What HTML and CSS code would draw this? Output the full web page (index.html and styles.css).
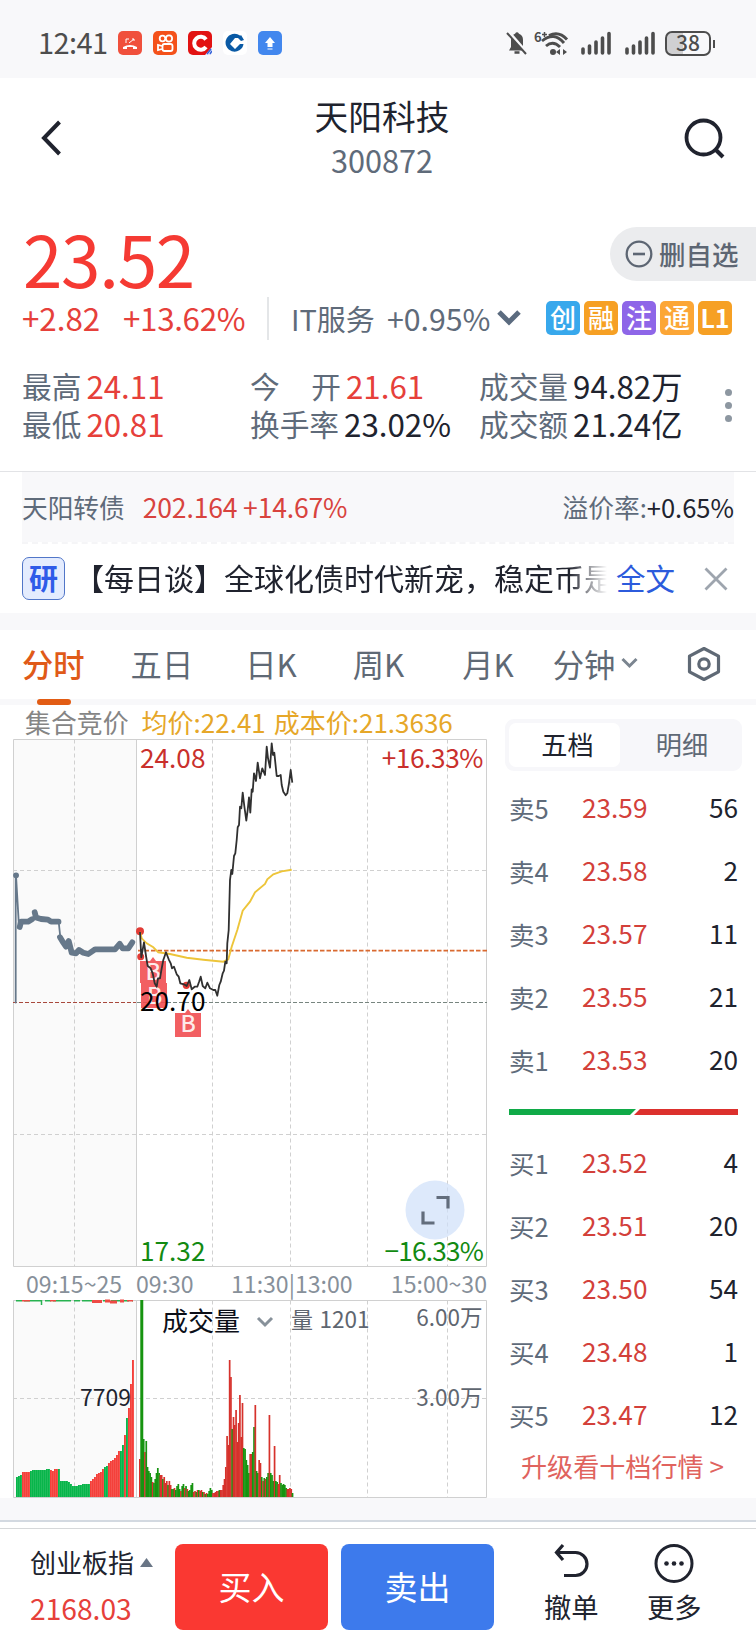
FILE: index.html
```html
<!DOCTYPE html>
<html lang="zh-CN">
<head>
  <meta charset="UTF-8">
  <meta name="viewport" content="width=device-width, initial-scale=1.0">
  <title>天阳科技 300872</title>
  <link rel="stylesheet" href="styles.css">
</head>
<body>
  <div class="status-bar">
    <span class="clock">12:41</span>
    <div class="app-icons">
      <svg width="24" height="24" viewBox="0 0 24 24"><rect width="24" height="24" rx="5" fill="#f0503c"/><path d="M5 18v-2q7-4 14 0v2h-4v-2h-6v2z" fill="#fff"/><path d="M8 8v4M8 8h3M11 12l5-4M14 8h2v2" stroke="#fff" stroke-width="1" fill="none"/></svg>
      <svg width="24" height="24" viewBox="0 0 24 24"><rect width="24" height="24" rx="5" fill="#f4511a"/><g fill="none" stroke="#fff" stroke-width="1.8"><circle cx="9.5" cy="7.5" r="2.8"/><circle cx="16" cy="7.5" r="3.1"/><rect x="9.5" y="13" width="10" height="7" rx="2"/><path d="M9 15l-4-1v5l4-1"/></g></svg>
      <svg width="24" height="24" viewBox="0 0 24 24"><rect width="24" height="24" rx="5" fill="#e21212"/><path d="M18 8.500A6.500 6.500 0 1 0 18 16" stroke="#fff" stroke-width="4" fill="none"/><path d="M24 16v4a4 4 0 0 1-4 4h-3z" fill="#dfe6ff"/><path d="M19 23l4-5M22 23l2-3" stroke="#3563d8" stroke-width="1.5"/></svg>
      <svg width="24" height="24" viewBox="0 0 24 24"><rect width="24" height="24" rx="5" fill="#fff"/><path d="M17 4.500A9 9 0 1 0 20.500 13H17l-5 5-5-5 5-6h6z" fill="#0a5aa5"/><path d="M18 4l3 5-3 1-3-3z" fill="#0a5aa5"/><path d="M12 8.500l4 4-4 4-4-4z" fill="#fff"/></svg>
      <svg width="24" height="24" viewBox="0 0 24 24"><rect width="24" height="24" rx="5" fill="#4287ee"/><path d="M12 6l5 6h-2.500v4h-5v-4H7zM9.500 17.500h5v1h-5z" fill="#fff"/></svg>
    </div>
    <div class="sys-icons">
      <svg width="22" height="24" viewBox="0 0 22 24"><path d="M3 19.500L5 16V9q0-5 4-6.300Q11 0 13 2.700 17 4 17 9v7l3 3.500z" fill="#4d4d4d"/><path d="M8.500 21.500h5" stroke="#4d4d4d" stroke-width="2.500"/><path d="M2 0l19 22" stroke="#f8f8fa" stroke-width="3"/><path d="M1 2l19 21" stroke="#4d4d4d" stroke-width="2"/></svg>
      <svg class="wifi" width="35" height="25" viewBox="0 0 35 25"><text x="0" y="11" font-size="13" font-weight="700" fill="#4d4d4d">6</text><path d="M8 3.500h5M10.500 1v5" stroke="#4d4d4d" stroke-width="1.500"/><g fill="none" stroke="#4d4d4d" stroke-width="2.900"><path d="M15 4.500q10-5 18 4"/><path d="M8 10q12-10 22 2"/><path d="M12 15q7-6 14 1"/></g><circle cx="19" cy="21" r="3" fill="#4d4d4d"/><path d="M22 21l4-3v6zM33 21l-4-3v6z" fill="#4d4d4d"/></svg>
      <svg class="signal" width="30" height="24" viewBox="0 0 30 24"><path d="M2 18v4M8.500 15v7M15 11v11M21.500 7v15M28 2.500V22" stroke="#4d4d4d" stroke-width="3.600" stroke-linecap="round"/></svg>
      <svg class="signal" width="30" height="24" viewBox="0 0 30 24"><path d="M2 18v4M8.500 15v7M15 11v11M21.500 7v15M28 2.500V22" stroke="#4d4d4d" stroke-width="3.600" stroke-linecap="round"/></svg>
      <span class="battery">38</span>
    </div>
  </div>

  <header class="nav">
    <svg width="32" height="40" viewBox="0 0 32 40"><path d="M25.500 4L10 20l15.500 16" fill="none" stroke="#20232e" stroke-width="4"/></svg>
    <div class="nav-title">
      <h1>天阳科技</h1>
      <p>300872</p>
    </div>
    <svg width="42" height="42" viewBox="0 0 42 42"><circle cx="19.500" cy="19.500" r="17" fill="none" stroke="#20232e" stroke-width="3.800"/><path d="M31 31l8 8" stroke="#20232e" stroke-width="4"/></svg>
  </header>

  <section class="quote">
    <div class="price-row">
      <span class="price">23.52</span>
      <button class="remove-btn">
        <svg width="28" height="28" viewBox="0 0 28 28"><circle cx="14" cy="14" r="12.300" fill="none" stroke="#5d6673" stroke-width="2.300"/><path d="M8 14h12" stroke="#5d6673" stroke-width="2.600"/></svg>
        <span>删自选</span>
      </button>
    </div>
    <div class="change-row">
      <span class="up change">+2.82</span>
      <span class="up percent">+13.62%</span>
      <span class="industry">IT服务</span>
      <span class="industry-change">+0.95%</span>
      <svg width="26" height="20" viewBox="0 0 26 20"><path d="M3 4l10 10L23 4" fill="none" stroke="#5b6b7f" stroke-width="5"/></svg>
      <div class="tags">
        <span class="tag blue">创</span><span class="tag orange">融</span><span class="tag purple">注</span><span class="tag amber">通</span><span class="tag orange latin">L1</span>
      </div>
    </div>
    <div class="stats">
      <dl>
        <div><dt>最高</dt><dd class="up">24.11</dd></div>
        <div><dt>最低</dt><dd class="up">20.81</dd></div>
      </dl>
      <dl>
        <div><dt class="spread"><span>今</span><span>开</span></dt><dd class="up">21.61</dd></div>
        <div><dt>换手率</dt><dd>23.02%</dd></div>
      </dl>
      <dl>
        <div><dt>成交量</dt><dd>94.82万</dd></div>
        <div><dt>成交额</dt><dd>21.24亿</dd></div>
      </dl>
      <div class="more-dots"><i></i><i></i><i></i></div>
    </div>
  </section>

  <section class="bond">
    <span>天阳转债</span>
    <span class="up bond-price">202.164 +14.67%</span>
    <span class="premium">溢价率:<b>+0.65%</b></span>
  </section>

  <section class="news">
    <span class="badge">研</span>
    <div class="headline">【每日谈】全球化债时代新宠，稳定币是</div>
    <a class="full">全文</a>
    <svg width="24" height="24" viewBox="0 0 24 24"><path d="M1.500 1.500l21 21M22.500 1.500l-21 21" stroke="#9ea5ae" stroke-width="2.800"/></svg>
  </section>

  <nav class="periods">
    <a class="active">分时</a>
    <a>五日</a>
    <a>日K</a>
    <a>周K</a>
    <a>月K</a>
    <a>分钟<svg width="17" height="12" viewBox="0 0 17 12"><path d="M1.500 2l7 7 7-7" fill="none" stroke="#7b8590" stroke-width="3"/></svg></a>
    <svg class="settings" width="34" height="36" viewBox="0 0 34 36"><path d="M17 2.500l14.500 7.700v15.600L17 33.500 2.500 25.800V10.200z" fill="none" stroke="#5f6975" stroke-width="3.200" stroke-linejoin="round"/><circle cx="17" cy="18" r="5.200" fill="none" stroke="#5f6975" stroke-width="3.200"/></svg>
  </nav>

  <main class="board">
    <div class="charts">
      <div class="legend">
        <span>集合竞价</span>
        <span class="avg">均价:22.41</span>
        <span class="avg">成本价:21.3636</span>
      </div>
      <svg class="price-chart" width="500" height="530" viewBox="0 0 500 530">
        <rect x="13" y="1" width="123.500" height="527" fill="#fafafa"/>
        <g class="grid">
          <path d="M74.500 1.500v527M212.500 1.500v527M290.500 1.500v527M367.500 1.500v527M447.500 1.500v527M13 132.500h474M13 396.500h474"/>
        </g>
        <path d="M13.500 1.500h473v527h-473zM136.500 1.500v527" fill="none" stroke="#d0d0d0"/>
        <path d="M13 264.500h123" stroke="#a8483c" stroke-dasharray="4 2"/>
        <path d="M137 264.500h350" stroke="#77857f" stroke-dasharray="4 2"/>
        <path d="M138 212.700h349" stroke="#d96a30" stroke-width="1.800" stroke-dasharray="4.500 2"/>
        <!-- call auction -->
        <g fill="none" stroke="#66788a" stroke-linecap="round" stroke-linejoin="round">
          <path d="M15.700 137V264.500M16 137.300L19 189M58.700 184l1.600 15" stroke-width="1.800"/>
          <path d="M16 137.300h.1M19.700 189L21 183.700H28L32 181.300M34.700 174.300L36 179.500 41 181l7 .7 3 2h7.500M60 199.300l3.300 5.400 2.700 4 2.700-5.700 1.300 5 1.700 6.700 4.300.6 3-3.300 4.300 2.700 5 1.300 6.700-4.700h20l4.700-5.500 3 4.500h5.600l4-6" stroke-width="5.800"/>
        </g>
        <g class="trade-mark">
          <path d="M140 223h10l3-4 3 4h10v22h-26z"/><path d="M141 245h26v25h-26z"/><path d="M175 275h10l3-4 3 4h10v24h-26z"/>
          <text x="145.500" y="242">B</text><text x="147" y="266">B</text><text x="180.500" y="294">B</text>
        </g>
        <g fill="#e23b35"><circle cx="140" cy="193.300" r="4"/><circle cx="140.700" cy="218.700" r="3.500"/><circle cx="186.300" cy="247.300" r="3.600"/></g>
        <polyline class="avg-line" points="140,194 141.7,200.3 146.7,205.3 153.3,209.3 158.3,214.3 170,216 186.7,219.7 203.3,221.7 223.3,223.7 228.3,221.3 231.7,208.7 237.3,192 242.7,172.7 250,163.7 255,154.3 265,146 267.3,141.3 273.3,136.3 281.7,133.3 291.7,131.7"/>
        <polyline class="price-line" points="140,194 141.3,219.3 144,204.3 146,218 147.7,228 150.7,230.3 152.7,235.3 154.7,245.3 156.7,248.7 158,240.3 160,240.3 161.3,232.7 163.3,222 166,214.3 168.7,221.3 170.7,225.3 172,230.3 174,228.7 176.7,236.3 178.7,238.7 180.3,245.3 184,246.3 186.7,248 189.3,242 191.7,251.3 194.7,248.7 197.3,248.7 199,244 200.7,238.7 202.7,248 205.3,250.3 207.3,244.7 210,250.3 213.3,252 215.3,252 217.3,257.7 219.3,247 220.7,243.7 222.7,235.3 224,232.7 225.3,223.7 226.7,225.3 227.3,205.3 228.7,192 230,142 231.3,132 232.3,136 234,118 235.3,115.3 236.7,102 237.7,89.3 239,87 240,68.7 241.3,70.3 242.7,54.7 244.3,68 246.3,82.7 247.7,72 249,59.3 250.3,74.7 251.7,51.3 252.7,53.7 254,35.3 256,43 257.7,24.7 260,40.3 262.3,30.3 265,37 266.7,8.7 268,20.3 270,29.7 271.7,5.3 273,17 274.3,14.7 276.7,38 278.7,38 280.7,37 281.7,47 283.3,53.7 285.7,57.3 287.3,55.3 289,45.3 290.7,32 292.3,44.7"/>
        <circle cx="435" cy="472" r="29.500" fill="#cfe0fa" fill-opacity=".7"/>
        <path d="M436.500 459.500h11.500v11M423 473.500v11.500h11.500" fill="none" stroke="#626d7c" stroke-width="3.200"/>
        <g class="axis-label">
          <text x="140" y="30" fill="#c9302c">24.08</text>
          <text x="483" y="30" fill="#c9302c" text-anchor="end" letter-spacing="-0.4">+16.33%</text>
          <text x="140" y="273" fill="#000">20.70</text>
          <text x="140" y="523" fill="#128a12">17.32</text>
          <text x="483" y="523" fill="#128a12" text-anchor="end" letter-spacing="-0.8">−16.33%</text>
        </g>
      </svg>
      <div class="time-axis">
        <span>09:15~25</span><span>09:30</span><span>11:30|13:00</span><span>15:00~30</span>
      </div>
      <svg class="volume-chart" width="500" height="199" viewBox="0 0 500 199">
        <rect x="13" y="1" width="123.500" height="197" fill="#fafafa"/>
        <g class="grid"><path d="M74.500 1.500v197M212.500 1.500v197M290.500 1.500v197M367.500 1.500v197M447.500 1.500v197M13 99.500h474"/></g>
        <path d="M13.500 1.500h473v197h-473zM136.500 1.500v197" fill="none" stroke="#d0d0d0"/>
        <path d="M16 1.800h117" stroke="#27b250" stroke-width="1.500" stroke-dasharray="6 2 18 3"/>
        <path d="M22 1.800h8M50 1.800h6M127 1.800h6" stroke="#ee4a45" stroke-width="1.500"/>
        <path d="M92 2.500h10M105 2h5M110 3h7M120 2h4" stroke="#ee4a45" stroke-width="3"/>
        <path d="M41.500 1v5" stroke="#27b250" stroke-width="1.500"/>
        <g id="auction-bars"></g>
        <g id="volume-bars"></g>
        <text x="162" y="31.500" font-size="26" fill="#0b0e18">成交量</text>
        <path d="M258 19l7 7 7-7" fill="none" stroke="#87919a" stroke-width="3"/>
        <text x="291" y="28.500" font-size="22" fill="#5f6670">量</text>
        <text x="319.500" y="28.500" font-size="22.500" fill="#5f6670">1201</text>
        <text x="482.500" y="26.500" font-size="22.500" fill="#5f6670" text-anchor="end">6.00万</text>
        <text x="482.500" y="107" font-size="22.500" fill="#5f6670" text-anchor="end">3.00万</text>
        <text x="80" y="107" font-size="23" fill="#20232e">7709</text>
      </svg>
    </div>

    <aside class="orders">
      <div class="switch"><span class="active">五档</span><span>明细</span></div>
      <ul>
        <li><span>卖5</span><b>23.59</b><em>56</em></li>
        <li><span>卖4</span><b>23.58</b><em>2</em></li>
        <li><span>卖3</span><b>23.57</b><em>11</em></li>
        <li><span>卖2</span><b>23.55</b><em>21</em></li>
        <li><span>卖1</span><b>23.53</b><em>20</em></li>
      </ul>
      <svg class="ratio" width="229" height="6" viewBox="0 0 229 6"><path d="M0 0h127l-6 6H0z" fill="#10aa48"/><path d="M131 0h98v6H125z" fill="#dc302d"/></svg>
      <ul>
        <li><span>买1</span><b>23.52</b><em>4</em></li>
        <li><span>买2</span><b>23.51</b><em>20</em></li>
        <li><span>买3</span><b>23.50</b><em>54</em></li>
        <li><span>买4</span><b>23.48</b><em>1</em></li>
        <li><span>买5</span><b>23.47</b><em>12</em></li>
      </ul>
      <a class="upgrade">升级看十档行情 &gt;</a>
    </aside>
  </main>

  <footer class="trade-bar">
    <div class="index">
      <p>创业板指<svg width="13" height="9" viewBox="0 0 13 9"><path d="M6.500 0L13 9H0z" fill="#697585"/></svg></p>
      <p class="up">2168.03</p>
    </div>
    <button class="buy">买入</button>
    <button class="sell">卖出</button>
    <a class="action">
      <svg width="38" height="40" viewBox="0 0 38 40"><path d="M11 2L4.500 9.500 11 17M5 9.500h18.500a11.500 11.500 0 0 1 0 23H12" fill="none" stroke="#20232e" stroke-width="3.200"/></svg>
      <span>撤单</span>
    </a>
    <a class="action last">
      <svg width="40" height="40" viewBox="0 0 40 40"><circle cx="20" cy="20.500" r="18" fill="none" stroke="#20232e" stroke-width="3"/><g fill="#20232e"><circle cx="12.500" cy="20.500" r="2.300"/><circle cx="20" cy="20.500" r="2.300"/><circle cx="27.500" cy="20.500" r="2.300"/></g></svg>
      <span>更多</span>
    </a>
  </footer>

  <script>
    // height + colour, one entry per bar
    const auction = "20g 21g 22g 25r 25r 25r 25r 26g 27g 27g 27g 27g 27g 27g 27g 28g 28g 27r 26r 28r 28r 28g 16g 16g 16g 16g 15g 13g 11g 11g 11g 12g 12g 13g 13g 13g 13g 16r 18r 20r 23r 24r 25r 28r 30g 31g 34r 36r 37r 39r 42r 46r 46g 52g 62r 79g 89r 113r 137r";
    const volume = "38r 197g 197g 58g 45r 56g 30g 26g 24g 20g 15r 14g 18g 24g 29g 24g 22r 22r 18g 20r 14r 16r 12g 16r 12r 8g 8g 9r 7g 11g 13g 8g 6r 11g 13g 9r 11g 8r 6g 7g 12g 14g 5r 6r 5g 7r 7g 6r 7r 5g 5r 3g 4r 3g 6g 9g 7g 4r 4r 5r 6r 6r 7g 7r 7r 12r 18r 30r 61r 52r 137r 120r 68g 80r 72r 87r 55r 74r 102r 60r 94r 49g 48g 37g 32g 24g 43r 43r 45g 70g 92r 26g 24g 37r 34r 20g 16r 19g 18r 20g 24g 82r 24g 22g 16g 51r 16g 15g 13r 22r 14g 12g 13g 12g 9g 8r 8r 9r 8r 4g";

    function drawBars(id, data, start, step, width, colors) {
      document.getElementById(id).innerHTML = data.split(" ").map((item, i) => {
        const h = parseInt(item);
        return `<rect x="${(start + i * step).toFixed(2)}" y="${198 - h}" width="${width}" height="${h}" fill="${colors[item.slice(-1)]}"/>`;
      }).join("");
    }

    drawBars("auction-bars", auction, 16, 2, 1.9, { r: "#f4403a", g: "#08b54a" });
    drawBars("volume-bars", volume, 139, 1.283, 1.7, { r: "#d6322c", g: "#169410" });
  </script>
</body>
</html>
```

FILE: styles.css
```css
* { margin: 0; padding: 0; box-sizing: border-box; }
body {
  width: 756px;
  height: 1632px;
  overflow: hidden;
  background-color: #fff;
  color: #20232e;
  font-family: "Noto Sans CJK SC", sans-serif;
  line-height: 1;
}
svg { display: block; flex: none; }
button { border: none; font-family: inherit; }
ul { list-style: none; }
.up { color: #e6403a; }

.status-bar {
  height: 78px;
  padding: 8px 45px 0 38px;
  background-color: #f8f8fa;
  display: flex;
  align-items: center;
}
.clock { width: 80px; padding-bottom: 3px; font-size: 29px; letter-spacing: -0.6px; color: #4d4d4d; }
.app-icons { display: flex; gap: 11px; }
.sys-icons { display: flex; align-items: center; margin-left: auto; }
.wifi { margin: 0 12px 0 6px; overflow: visible; }
.signal { margin-right: 14px; }
.battery {
  position: relative;
  width: 46px;
  height: 25px;
  margin-left: -4px;
  border: 2px solid #4d4d4d;
  border-radius: 7px;
  background: linear-gradient(90deg, #d0d0d2 38%, transparent 38%);
  color: #4d4d4d;
  font-size: 21px;
  font-weight: 500;
  line-height: 19px;
  text-align: center;
}
.battery::after {
  content: "";
  position: absolute;
  right: -6px;
  top: 7px;
  width: 2px;
  height: 8px;
  background-color: #4d4d4d;
}

.nav {
  height: 142px;
  padding: 0 30px 0 34px;
  display: flex;
  justify-content: space-between;
  align-items: flex-start;
}
.nav > svg { margin-top: 40px; }
.nav-title { padding: 20px 0 0 14px; text-align: center; }
.nav-title h1 { font-size: 33.700px; font-weight: 400; line-height: 36px; }
.nav-title p { margin-top: 8px; font-size: 30.700px; line-height: 36px; color: #5f6b7a; }

.price-row {
  height: 74px;
  padding-left: 23px;
  display: flex;
  justify-content: space-between;
  align-items: flex-start;
}
.price { font-size: 71px; line-height: 74px; letter-spacing: -1.3px; color: #f53a33; }
.remove-btn {
  width: 146px;
  height: 54px;
  margin-top: 7px;
  padding-left: 15px;
  border-radius: 27px 0 0 27px;
  background-color: #ebecee;
  color: #5d6673;
  font-size: 26.500px;
  font-weight: 500;
  display: flex;
  align-items: center;
  gap: 6px;
}
.remove-btn span { padding-bottom: 2px; }
.change-row {
  height: 48px;
  padding: 0 24px 0 22px;
  display: flex;
  align-items: center;
  font-size: 31.300px;
  line-height: 46px;
}
.change-row > span { padding-bottom: 1px; }
.change { width: 101px; }
.percent { width: 144px; letter-spacing: -0.3px; }
.change-row .industry {
  height: 43px;
  padding: 0 0 0 22px;
  border-left: 2px solid #e4e6e8;
  font-size: 29px;
  line-height: 42px;
  color: #5f6b7a;
}
.industry-change { margin: 0 6px 0 12px; font-size: 30.300px; color: #5f6b7a; }
.tags { display: flex; gap: 4px; margin-left: auto; }
.tag {
  width: 34px;
  height: 34px;
  border-radius: 5px;
  color: #fff;
  font-size: 26px;
  font-weight: 500;
  line-height: 32px;
  text-align: center;
}
.latin { font-weight: 700; font-size: 25px; }
.blue { background-color: #38a8ec; }
.orange { background-color: #f6a024; }
.purple { background-color: #8e66e8; }
.amber { background-color: #fca636; }

.stats {
  height: 130px;
  padding: 25px 24px 0 22px;
  border-bottom: 1px solid #e2e3e6;
  display: grid;
  grid-template-columns: 228px 229px 246px 7px;
}
.stats dl > div { display: flex; height: 38px; align-items: center; }
.stats dt { font-size: 29.700px; color: #5f6b7a; }
.stats dd { margin-left: 5px; font-size: 31.300px; white-space: nowrap; }
.stats .spread { display: flex; justify-content: space-between; width: 91px; }
.more-dots { display: flex; flex-direction: column; gap: 6px; padding-top: 22px; }
.more-dots i { width: 7px; height: 7px; border-radius: 50%; background-color: #8d97a1; }

.bond {
  height: 72px;
  margin: 0 22px;
  border-bottom: 2px dashed #f5f5f7;
  background: #f8f8fa content-box;
  display: flex;
  align-items: center;
  font-size: 25.700px;
  color: #5f6b7a;
}
.bond-price { margin-left: 18px; font-size: 26.500px; color: #d8433e; white-space: pre; letter-spacing: -0.15px; }
.premium { margin-left: auto; }
.premium b { font-weight: 400; font-size: 25.500px; color: #20232e; }

.news {
  height: 69px;
  padding: 0 28px 0 22px;
  display: flex;
  align-items: center;
}
.badge {
  width: 43px;
  height: 43px;
  border: 1px solid #5176c8;
  border-radius: 7px;
  background-color: #e4ecfe;
  color: #2f5be8;
  font-size: 29px;
  font-weight: 700;
  line-height: 39px;
  text-align: center;
}
.headline {
  width: 542px;
  margin-left: 9px;
  padding-bottom: 3px;
  overflow: hidden;
  white-space: nowrap;
  font-size: 30px;
  line-height: 40px;
  -webkit-mask-image: linear-gradient(90deg, #000 495px, transparent 533px);
  mask-image: linear-gradient(90deg, #000 495px, transparent 533px);
}
.full { width: 88px; padding-bottom: 2px; font-size: 29.500px; color: #2c5bdc; }

.periods {
  height: 92px;
  padding: 0 35px 6px 22px;
  border-top: 17px solid #f8f8fa;
  border-bottom: 6px solid #f8f8fa;
  display: flex;
  align-items: center;
  font-size: 31.300px;
  color: #5f6975;
}
.periods a { position: relative; display: flex; align-items: center; gap: 6px; margin-right: 46px; top: 2px; }
.periods a:nth-child(2) { margin-right: 52px; }
.periods a:nth-child(3) { margin-right: 56px; }
.periods a:nth-child(4) { margin-right: 58px; }
.periods a:nth-child(5) { margin-right: 39px; }
.periods a:nth-child(6) { margin-right: 0; }
.periods .active { color: #e05a18; font-weight: 500; }
.periods .active::after {
  content: "";
  position: absolute;
  left: 15px;
  top: 51px;
  width: 34px;
  height: 6px;
  border-radius: 3px;
  background-color: #e25c14;
}
.settings { position: relative; top: 2px; margin-left: auto; }

.board { height: 793px; display: flex; }
.charts { width: 500px; }
.legend {
  height: 33px;
  padding-left: 25px;
  display: flex;
  align-items: center;
  font-size: 25.900px;
  color: #858585;
}
.legend .avg { margin-left: 13px; color: #e6a728; font-size: 26px; }
.legend .avg + .avg { margin-left: 8px; }
.grid { fill: none; stroke: #d0d0d0; stroke-dasharray: 4 3; }
.avg-line { fill: none; stroke: #edc53a; stroke-width: 1.9; }
.price-line { fill: none; stroke: #303030; stroke-width: 1.8; stroke-linejoin: round; }
.trade-mark { fill: #f0494c; fill-opacity: 0.88; }
.trade-mark text { fill: #fff; font-size: 23px; font-weight: 500; }
.axis-label { font-size: 26.200px; }
.time-axis {
  height: 31px;
  padding: 0 13px 0 26px;
  display: grid;
  grid-template-columns: 110px 95px 1fr auto;
  align-items: center;
  font-size: 23.100px;
  color: #87909a;
}

.orders { width: 237px; margin-left: 5px; padding-top: 14px; }
.switch {
  height: 52px;
  padding: 4px;
  border-radius: 9px;
  background-color: #f7f7fa;
  display: flex;
  font-size: 26.200px;
  line-height: 43px;
  text-align: center;
  color: #5f6975;
}
.switch span { flex: 1; padding-left: 6px; }
.switch .active { flex: 0 0 111px; border-radius: 7px; background-color: #fff; color: #20232e; }
.orders ul { margin-top: 5px; padding: 0 4px; }
.orders li {
  height: 63px;
  display: grid;
  grid-template-columns: 73px 1fr auto;
  align-items: center;
  font-size: 26.200px;
}
.orders li span { font-size: 25.500px; color: #5f6b7a; }
.orders li b { font-weight: 400; color: #d3403a; }
.orders li em { font-style: normal; }
.ratio { margin: 18px 0 16px 4px; }
.upgrade { display: block; margin: 5px 0 0 16px; font-size: 26.100px; line-height: 31px; color: #e0635e; white-space: nowrap; }

.trade-bar {
  height: 134px;
  border-top: 22px solid #f8f8fa;
  padding: 0 26px 0 30px;
  display: flex;
  background: linear-gradient(#d3d9e1 2px, transparent 2px, transparent 8px, #d6d8da 8px, #d6d8da 9px, transparent 9px);
}
.index { width: 145px; padding-top: 27px; font-size: 26px; line-height: 30px; }
.index p { display: flex; align-items: center; gap: 6px; }
.index .up { margin-top: 16px; font-size: 28.200px; }
.buy, .sell {
  width: 153px;
  height: 86px;
  margin: 24px 13px 0 0;
  border-radius: 8px;
  background-color: #fa3832;
  color: #fff;
  font-size: 33px;
  line-height: 80px;
  padding-bottom: 3px;
}
.sell { background-color: #3d7aec; margin-right: 50px; }
.action { width: 54px; margin-right: 49px; padding-top: 23px; font-size: 27.300px; }
.action svg { margin: 0 auto; }
.action span { display: block; margin-top: 9px; line-height: 28px; white-space: nowrap; }
.action.last { margin-right: 0; }
```
